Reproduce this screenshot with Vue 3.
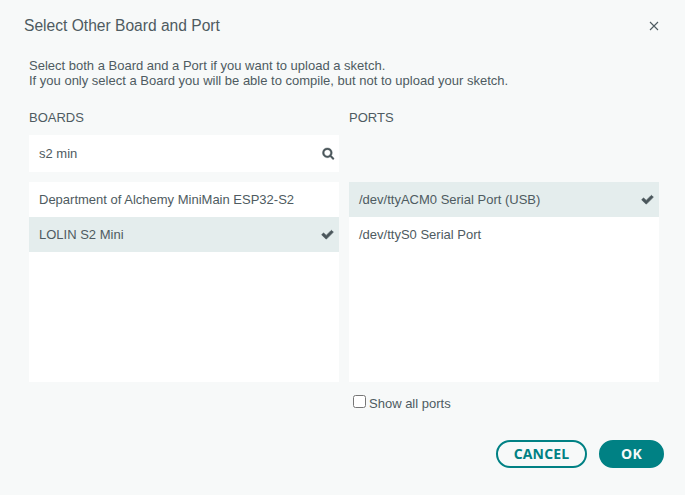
<script setup>
import { ref } from 'vue'

const query = ref('s2 min')
const showAll = ref(false)
const board = ref('LOLIN S2 Mini')
const port = ref('/dev/ttyACM0 Serial Port (USB)')
const boards = ['Department of Alchemy MiniMain ESP32-S2', 'LOLIN S2 Mini']
const ports = ['/dev/ttyACM0 Serial Port (USB)', '/dev/ttyS0 Serial Port']
const check =
  'M1671 566q0 40-28 68l-724 724-136 136q-28 28-68 28t-68-28l-136-136-362-362q-28-28-28-68t28-68l136-136q28-28 68-28t68 28l294 295 656-657q28-28 68-28t68 28l136 136q28 28 28 68z'
</script>

<template>
  <div class="dialog">
    <header class="title">
      <span>Select Other Board and Port</span>
      <svg class="close" viewBox="0 0 10 10"><path d="M1 1L9 9M9 1L1 9" /></svg>
    </header>
    <div class="content">
      <p class="hint">
        Select both a Board and a Port if you want to upload a sketch.<br />
        If you only select a Board you will be able to compile, but not to upload your sketch.
      </p>
      <div class="columns">
        <section class="column">
          <div class="heading">BOARDS</div>
          <div class="search">
            <input v-model="query" type="text" />
            <svg class="icon" viewBox="0 0 1792 1792">
              <path d="M1216 832q0-185-131.5-316.5t-316.5-131.5-316.5 131.5-131.5 316.5 131.5 316.5 316.5 131.5 316.5-131.5 131.5-316.5zm512 832q0 52-38 90t-90 38q-54 0-90-38l-343-342q-179 124-399 124-143 0-273.5-55.5t-225-150-150-225-55.5-273.5 55.5-273.5 150-225 225-150 273.5-55.5 273.5 55.5 225 150 150 225 55.5 273.5q0 220-124 399l343 343q37 37 37 90z" />
            </svg>
          </div>
          <div class="list">
            <div v-for="b in boards" :key="b" class="item" :class="{ selected: b === board }" @click="board = b">
              <span>{{ b }}</span>
              <svg v-if="b === board" class="icon" viewBox="0 0 1792 1792"><path :d="check" /></svg>
            </div>
          </div>
        </section>
        <section class="column">
          <div class="heading">PORTS</div>
          <div class="search empty"></div>
          <div class="list">
            <div v-for="p in ports" :key="p" class="item" :class="{ selected: p === port }" @click="port = p">
              <span>{{ p }}</span>
              <svg v-if="p === port" class="icon" viewBox="0 0 1792 1792"><path :d="check" /></svg>
            </div>
          </div>
          <label class="show-all"><input v-model="showAll" type="checkbox" /><span>Show all ports</span></label>
        </section>
      </div>
    </div>
    <footer class="actions">
      <button class="btn outline">CANCEL</button>
      <button class="btn primary">OK</button>
    </footer>
  </div>
</template>

<style>
body {
  background: #f7f9f9;
}
</style>

<style scoped>
.dialog {
  box-sizing: border-box;
  width: 685px;
  height: 495px;
  overflow: hidden;
  background: #f7f9f9;
  color: #4e5b61;
  font: 13px/15px "Liberation Sans", Arial, sans-serif;
}
.title {
  display: flex;
  align-items: center;
  justify-content: space-between;
  height: 20px;
  padding: 16px 26px 0 24px;
  font-size: 15.6px;
  line-height: 20px;
}
.close {
  width: 10px;
  height: 10px;
}
.close path {
  fill: none;
  stroke: #4e5b61;
  stroke-width: 1.1;
}
.content {
  padding: 22px 26px 0 29px;
}
.hint {
  margin: 0;
}
.columns {
  display: flex;
  gap: 10px;
  margin-top: 22px;
}
.column {
  width: 310px;
}
.heading {
  height: 25px;
}
.search {
  display: flex;
  align-items: center;
  box-sizing: border-box;
  height: 37px;
  margin-bottom: 10px;
  padding: 0 4.5px 0 10px;
  background: #fff;
}
.search.empty {
  background: none;
}
.search input {
  flex: 1;
  min-width: 0;
  padding: 0;
  border: 0;
  outline: 0;
  background: none;
  color: inherit;
  font: inherit;
}
.icon {
  width: 13px;
  height: 13px;
  overflow: visible;
  fill: #4a565b;
  stroke: #4a565b;
  stroke-width: 50;
}
.search .icon {
  width: 12.5px;
  height: 12.5px;
}
.list {
  height: 200px;
  background: #fff;
}
.item {
  display: flex;
  align-items: center;
  justify-content: space-between;
  box-sizing: border-box;
  height: 35px;
  padding: 0 5px 0 10px;
}
.item .icon {
  stroke-width: 90;
}
.selected {
  background: #e4eded;
}
.show-all {
  display: flex;
  align-items: flex-start;
  margin-top: 13px;
  padding-left: 4px;
}
.show-all input {
  width: 13px;
  height: 13px;
  margin: 0 3px 0 0;
}
.show-all span {
  margin-top: 1px;
}
.actions {
  display: flex;
  justify-content: flex-end;
  gap: 12px;
  padding: 29px 21px 0 0;
}
.btn {
  box-sizing: border-box;
  height: 28px;
  padding: 0;
  border: 2px solid #008184;
  border-radius: 14px;
  font: 700 14px/24px "Open Sans", sans-serif;
  letter-spacing: 0.18px;
}
.outline {
  width: 91px;
  background: none;
  color: #008184;
}
.primary {
  width: 65px;
  background: #008184;
  color: #f7f9f9;
}
</style>
